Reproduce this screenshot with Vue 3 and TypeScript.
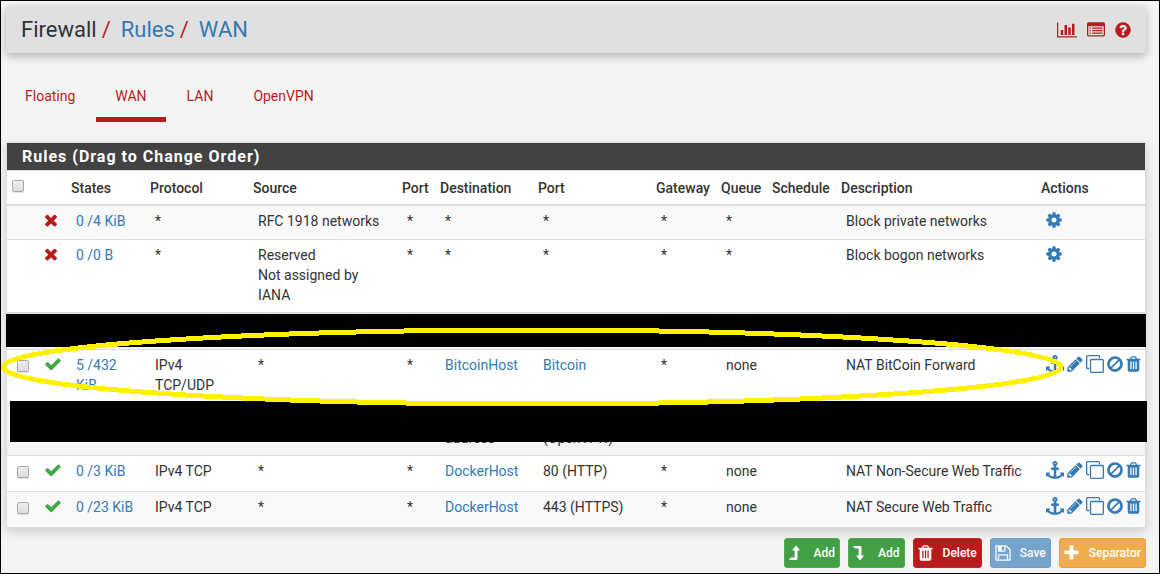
<script setup lang="ts">
import { ref } from 'vue'

interface Glyph {
  box: string
  width: number
  path: string
}

interface Rule {
  id: number
  kind: 'system' | 'user' | 'hidden'
  pass?: boolean
  states?: string
  protocol?: string
  source?: string
  sourcePort?: string
  destination?: string
  destinationPort?: string
  alias?: boolean
  portAlias?: boolean
  gateway?: string
  queue?: string
  description?: string
}

const glyphs: Record<string, Glyph> = {
  times: {
    box: '302 0 1188 1792',
    width: 12,
    path: 'M1490 1322q0 40-28 68l-136 136q-28 28-68 28t-68-28l-294-294-294 294q-28 28-68 28t-68-28l-136-136q-28-28-28-68t28-68l294-294-294-294q-28-28-28-68t28-68l136-136q28-28 68-28t68 28l294 294 294-294q28-28 68-28t68 28l136 136q28 28 28 68t-28 68l-294 294 294 294q28 28 28 68z',
  },
  check: {
    box: '121 0 1550 1792',
    width: 16,
    path: 'M1671 566q0 40-28 68l-724 724-136 136q-28 28-68 28t-68-28l-136-136-362-362q-28-28-28-68t28-68l136-136q28-28 68-28t68 28l294 295 656-657q28-28 68-28t68 28l136 136q28 28 28 68z',
  },
  cog: {
    box: '128 0 1536 1792',
    width: 16,
    path: 'M1152 896q0-106-75-181t-181-75-181 75-75 181 75 181 181 75 181-75 75-181zm512-109v222q0 12-8 23t-20 13l-185 28q-19 54-39 91 35 50 107 138 10 12 10 25t-9 23q-27 37-99 108t-94 71q-12 0-26-9l-138-108q-44 23-91 38-16 136-29 186-7 28-36 28h-222q-14 0-24.500-8.500t-11.500-21.500l-28-184q-49-16-90-37l-141 107q-10 9-25 9-14 0-25-11-126-114-165-168-7-10-7-23 0-12 8-23 15-21 51-66.500t54-70.500q-27-50-41-99l-183-27q-13-2-21-12.500t-8-23.500v-222q0-12 8-23t19-13l186-28q14-46 39-92-40-57-107-138-10-12-10-24 0-10 9-23 26-36 98.500-107.500t94.500-71.500q13 0 26 10l138 107q44-23 91-38 16-136 29-186 7-28 36-28h222q14 0 24.500 8.500t11.500 21.500l28 184q49 16 90 37l142-107q9-9 24-9 13 0 25 10 129 119 165 170 7 8 7 22 0 12-8 23-15 21-51 66.500t-54 70.500q26 50 41 98l183 28q13 2 21 12.500t8 23.500z',
  },
  anchor: {
    box: '0 0 1792 1792',
    width: 18,
    path: 'M960 256q0-26-19-45t-45-19-45 19-19 45 19 45 45 19 45-19 19-45zm832 928v352q0 22-20 30-8 2-12 2-12 0-23-9l-93-93q-119 143-318.500 226.500t-429.500 83.500-429.500-83.500-318.500-226.500l-93 93q-9 9-23 9-4 0-12-2-20-8-20-30v-352q0-14 9-23t23-9h352q22 0 30 20 8 19-7 35l-100 100q67 91 189.500 153.500t271.500 82.500v-647h-192q-26 0-45-19t-19-45v-128q0-26 19-45t45-19h192v-163q-58-34-93-92.500t-35-128.500q0-106 75-181t181-75 181 75 75 181q0 70-35 128.500t-93 92.500v163h192q26 0 45 19t19 45v128q0 26-19 45t-45 19h-192v647q149-20 271.500-82.500t189.500-153.500l-100-100q-15-16-7-35 8-20 30-20h352q14 0 23 9t9 23z',
  },
  pencil: {
    box: '128 0 1536 1792',
    width: 16,
    path: 'M491 1536l91-91-235-235-91 91v107h128v128h107zm523-928q0-22-22-22-10 0-17 7l-542 542q-7 7-7 17 0 22 22 22 10 0 17-7l542-542q7-7 7-17zm-54-192l416 416-832 832h-416v-416zm683 96q0 53-37 90l-166 166-416-416 166-165q36-38 90-38 53 0 91 38l235 234q37 39 37 91z',
  },
  clone: {
    box: '0 0 1792 1792',
    width: 18,
    path: 'M1664 1632v-1088q0-13-9.500-22.500t-22.500-9.500h-1088q-13 0-22.500 9.500t-9.500 22.500v1088q0 13 9.500 22.500t22.500 9.500h1088q13 0 22.500-9.500t9.500-22.500zm128-1088v1088q0 66-47 113t-113 47h-1088q-66 0-113-47t-47-113v-1088q0-66 47-113t113-47h1088q66 0 113 47t47 113zm-384-384v160h-128v-160q0-13-9.500-22.500t-22.500-9.500h-1088q-13 0-22.500 9.500t-9.500 22.500v1088q0 13 9.500 22.500t22.500 9.500h160v128h-160q-66 0-113-47t-47-113v-1088q0-66 47-113t113-47h1088q66 0 113 47t47 113z',
  },
  ban: {
    box: '128 0 1536 1792',
    width: 16,
    path: 'M112 896a784 784 0 1 1 1568 0a784 784 0 1 1-1568 0zM1312 595L595 1312A518 518 0 0 0 1312 595zM1197 480A518 518 0 0 0 480 1197z',
  },
  trash: {
    box: '192 0 1408 1792',
    width: 15,
    path: 'M704 1376v-704q0-14-9-23t-23-9h-64q-14 0-23 9t-9 23v704q0 14 9 23t23 9h64q14 0 23-9t9-23zm256 0v-704q0-14-9-23t-23-9h-64q-14 0-23 9t-9 23v704q0 14 9 23t23 9h64q14 0 23-9t9-23zm256 0v-704q0-14-9-23t-23-9h-64q-14 0-23 9t-9 23v704q0 14 9 23t23 9h64q14 0 23-9t9-23zm-544-992h448l-48-117q-7-9-17-11h-317q-10 2-17 11zm928 32v64q0 14-9 23t-23 9h-96v948q0 83-47 143.500t-113 60.500h-832q-66 0-113-58.500t-47-141.500v-952h-96q-14 0-23-9t-9-23v-64q0-14 9-23t23-9h309l70-167q15-37 54-63t79-26h320q40 0 79 26t54 63l70 167h309q14 0 23 9t9 23z',
  },
  chart: {
    box: '0 0 2048 1792',
    width: 20,
    path: 'M640 896v512h-256v-512h256zm384-512v1024h-256v-1024h256zm1024 1152v128h-2048v-1536h128v1408h1920zm-640-896v768h-256v-768h256zm384-384v1152h-256v-1152h256z',
  },
  list: {
    box: '0 0 1792 1792',
    width: 18,
    path: 'M160 128H1632Q1792 128 1792 288V1376Q1792 1536 1632 1536H160Q0 1536 0 1376V288Q0 128 160 128zM128 512V1376Q128 1408 160 1408H1632Q1664 1408 1664 1376V512zM256 640h128v128H256zM512 640h1024v128H512zM256 896h128v128H256zM512 896h1024v128H512zM256 1152h128v128H256zM512 1152h1024v128H512z',
  },
  question: {
    box: '128 0 1536 1792',
    width: 16,
    path: 'M1024 1376v-192q0-14-9-23t-23-9h-192q-14 0-23 9t-9 23v192q0 14 9 23t23 9h192q14 0 23-9t9-23zm256-672q0-88-55.500-163t-138.500-116-170-41q-243 0-371 213-15 24 8 42l132 100q7 6 19 6 16 0 25-12 53-68 86-92 34-24 86-24 48 0 85.500 26t37.500 59q0 38-20 61t-68 45q-63 28-115.500 86.500t-52.500 125.500v36q0 14 9 23t23 9h192q14 0 23-9t9-23q0-19 21.500-49.500t54.500-49.500q32-18 49-28.500t46-35 44.500-48 28-60.500 12.500-81zm384 192q0 209-103 385.500t-279.500 279.500-385.500 103-385.500-103-279.500-279.500-103-385.500 103-385.500 279.500-279.500 385.500-103 385.500 103 279.500 279.500 103 385.500z',
  },
  up: {
    box: '0 0 1120 1792',
    width: 11,
    path: 'M0 1600H720Q864 1600 864 1456V640H1060Q1120 630 1080 576L760 176Q720 130 680 176L360 576Q320 630 380 640H576V1344H240Q215 1344 200 1364L0 1580z',
  },
  down: {
    box: '0 0 1120 1792',
    width: 11,
    path: 'M0 192H720Q864 192 864 336V1152H1060Q1120 1162 1080 1216L760 1616Q720 1662 680 1616L360 1216Q320 1162 380 1152H576V448H240Q215 448 200 428L0 212z',
  },
  save: {
    box: '128 0 1536 1792',
    width: 16,
    path: 'M512 1536h768v-384h-768v384zm896 0h128v-896q0-14-10-38.500t-20-34.500l-281-281q-10-10-34-20t-39-10v416q0 40-28 68t-68 28h-576q-40 0-68-28t-28-68v-416h-128v1280h128v-416q0-40 28-68t68-28h832q40 0 68 28t28 68v416zm-384-928v-320q0-13-9.500-22.500t-22.500-9.500h-192q-13 0-22.500 9.500t-9.500 22.500v320q0 13 9.500 22.500t22.500 9.500h192q13 0 22.500-9.500t9.500-22.500zm640 32v928q0 40-28 68t-68 28h-1344q-40 0-68-28t-28-68v-1344q0-40 28-68t68-28h928q40 0 88 20t76 48l280 280q28 28 48 76t20 88z',
  },
  plus: {
    box: '192 0 1408 1792',
    width: 15,
    path: 'M1600 736v192q0 40-28 68t-68 28h-416v416q0 40-28 68t-68 28h-192q-40 0-68-28t-28-68v-416h-416q-40 0-68-28t-28-68v-192q0-40 28-68t68-28h416v-416q0-40 28-68t68-28h192q40 0 68 28t28 68v416h416q40 0 68 28t28 68z',
  },
}

const tabs = ['Floating', 'WAN', 'LAN', 'OpenVPN']
const activeTab = ref('WAN')

const shortcuts = [
  { icon: 'chart', label: 'Status' },
  { icon: 'list', label: 'Log' },
  { icon: 'question', label: 'Help' },
]

const headings = ['States', 'Protocol', 'Source', 'Port', 'Destination', 'Port', 'Gateway', 'Queue', 'Schedule', 'Description', 'Actions']

const ruleActions = [
  { icon: 'anchor', label: 'Move checked rules here' },
  { icon: 'pencil', label: 'Edit' },
  { icon: 'clone', label: 'Copy' },
  { icon: 'ban', label: 'Disable' },
  { icon: 'trash', label: 'Delete' },
]

const star = { source: '*', sourcePort: '*', gateway: '*' }

const rules: Rule[] = [
  { ...star, id: 1, kind: 'system', pass: false, states: '0 /4 KiB', protocol: '*', source: 'RFC 1918 networks', destination: '*', destinationPort: '*', queue: '*', description: 'Block private networks' },
  { ...star, id: 2, kind: 'system', pass: false, states: '0 /0 B', protocol: '*', source: 'Reserved\nNot assigned by\nIANA', destination: '*', destinationPort: '*', queue: '*', description: 'Block bogon networks' },
  { id: 3, kind: 'hidden' },
  { ...star, id: 4, kind: 'user', pass: true, states: '5 /432\nKiB', protocol: 'IPv4\nTCP/UDP', destination: 'BitcoinHost', alias: true, destinationPort: 'Bitcoin', portAlias: true, queue: 'none', description: 'NAT BitCoin Forward' },
  { id: 5, kind: 'hidden', destination: '\naddress', destinationPort: '\n(OpenVPN)' },
  { ...star, id: 6, kind: 'user', pass: true, states: '0 /3 KiB', protocol: 'IPv4 TCP', destination: 'DockerHost', alias: true, destinationPort: '80 (HTTP)', queue: 'none', description: 'NAT Non-Secure Web Traffic' },
  { ...star, id: 7, kind: 'user', pass: true, states: '0 /23 KiB', protocol: 'IPv4 TCP', destination: 'DockerHost', alias: true, destinationPort: '443 (HTTPS)', queue: 'none', description: 'NAT Secure Web Traffic' },
]

const buttons = [
  { icon: 'up', label: 'Add', tone: 'success' },
  { icon: 'down', label: 'Add', tone: 'success' },
  { icon: 'trash', label: 'Delete', tone: 'danger' },
  { icon: 'save', label: 'Save', tone: 'primary' },
  { icon: 'plus', label: 'Separator', tone: 'warning' },
]
</script>

<template>
  <div class="page">
    <header class="topbar">
      <h1 class="crumbs">
        <span>Firewall</span><i>/</i><a href="#rules">Rules</a><i>/</i><a href="#wan">WAN</a>
      </h1>
      <nav class="shortcuts" aria-label="Shortcuts">
        <a v-for="s in shortcuts" :key="s.icon" href="#" :aria-label="s.label">
          <svg class="icon" :width="glyphs[s.icon].width" height="18" :viewBox="glyphs[s.icon].box"><path :d="glyphs[s.icon].path" /></svg>
        </a>
      </nav>
    </header>

    <nav class="tabs" aria-label="Interfaces">
      <a v-for="t in tabs" :key="t" href="#" class="tab" :class="{ active: t === activeTab }" @click.prevent="activeTab = t">{{ t }}</a>
    </nav>

    <section class="panel">
      <h2 class="panel-title">Rules (Drag to Change Order)</h2>
      <table class="rules">
        <colgroup>
          <col class="c-check"><col class="c-icon"><col class="c-states"><col class="c-proto"><col class="c-source">
          <col class="c-sport"><col class="c-dest"><col class="c-dport"><col class="c-gate"><col class="c-queue">
          <col class="c-sched"><col class="c-desc"><col class="c-act">
        </colgroup>
        <thead>
          <tr>
            <th class="check"><input type="checkbox" class="box" aria-label="Select all rules"></th>
            <th></th>
            <th v-for="(h, i) in headings" :key="i" scope="col">{{ h }}</th>
          </tr>
        </thead>
        <tbody>
          <tr v-for="r in rules" :key="r.id" :class="[r.kind, 'rule-' + r.id]">
            <td><input v-if="r.kind === 'user'" type="checkbox" class="box" :aria-label="'Select ' + r.description"></td>
            <td>
              <svg v-if="r.pass" class="icon pass" :width="glyphs.check.width" height="18" :viewBox="glyphs.check.box"><path :d="glyphs.check.path" /></svg>
              <svg v-else-if="r.kind === 'system'" class="icon block" :width="glyphs.times.width" height="18" :viewBox="glyphs.times.box"><path :d="glyphs.times.path" /></svg>
            </td>
            <td><a v-if="r.states" href="#">{{ r.states }}</a></td>
            <td>{{ r.protocol }}</td>
            <td>{{ r.source }}</td>
            <td>{{ r.sourcePort }}</td>
            <td><a v-if="r.alias" href="#">{{ r.destination }}</a><template v-else>{{ r.destination }}</template></td>
            <td><a v-if="r.portAlias" href="#">{{ r.destinationPort }}</a><template v-else>{{ r.destinationPort }}</template></td>
            <td>{{ r.gateway }}</td>
            <td>{{ r.queue }}</td>
            <td></td>
            <td>{{ r.description }}</td>
            <td class="act">
              <div v-if="r.kind === 'system'" class="actions">
                <a href="#" aria-label="Settings">
                  <svg class="icon" :width="glyphs.cog.width" height="18" :viewBox="glyphs.cog.box"><path :d="glyphs.cog.path" /></svg>
                </a>
              </div>
              <div v-else-if="r.kind === 'user'" class="actions">
                <a v-for="a in ruleActions" :key="a.icon" href="#" :aria-label="a.label">
                  <svg class="icon" :width="glyphs[a.icon].width" height="18" :viewBox="glyphs[a.icon].box"><path :d="glyphs[a.icon].path" /></svg>
                </a>
              </div>
            </td>
          </tr>
        </tbody>
      </table>
      <div class="redaction first"></div>
      <div class="redaction second"></div>
      <svg class="marker" viewBox="0 0 1064 80" preserveAspectRatio="none" aria-hidden="true">
        <ellipse cx="532" cy="40" rx="529" ry="37" />
      </svg>
    </section>

    <div class="buttons">
      <button v-for="(b, i) in buttons" :key="i" type="button" class="btn" :class="b.tone">
        <svg class="icon" :width="glyphs[b.icon].width" height="18" :viewBox="glyphs[b.icon].box"><path :d="glyphs[b.icon].path" /></svg>
        <span>{{ b.label }}</span>
      </button>
    </div>
  </div>
</template>

<style>
body {
  margin: 0;
  background: #f4f4f4;
}
</style>

<style scoped>
.page {
  box-sizing: border-box;
  min-height: 100vh;
  padding: 5px 13px 5px 5px;
  border: 1px solid #000;
  font-family: Roboto, "Liberation Sans", sans-serif;
  font-size: 14px;
  line-height: 20px;
  color: #333;
  background: #f4f4f4;
  overflow: hidden;
}
a {
  color: #337ab7;
  text-decoration: none;
}
.icon {
  display: block;
  fill: currentColor;
}
.topbar {
  display: flex;
  align-items: center;
  justify-content: space-between;
  height: 47px;
  padding: 0 15px;
  border-radius: 3px;
  background: #e0e0e0;
  box-shadow: 0 3px 8px rgba(0, 0, 0, 0.28);
}
.crumbs {
  display: flex;
  margin: 0;
  font-size: 22px;
  line-height: 28px;
  font-weight: 400;
  color: #333;
}
.crumbs i {
  margin: 0 10px 0 5px;
  font-style: normal;
  color: #b71c1c;
}
.shortcuts {
  display: flex;
  gap: 10px;
}
.shortcuts a {
  color: #b71c1c;
}
.tabs {
  display: flex;
  gap: 2px;
  margin: 23px 0 20px;
}
.tab {
  padding: 10px 19px 11px;
  border-bottom: 5px solid transparent;
  color: #b71c1c;
}
.tab.active {
  border-bottom-color: #b71c1c;
}
.panel {
  position: relative;
  border: 1px solid #ddd;
  background: #fff;
  box-shadow: 0 4px 10px rgba(0, 0, 0, 0.16);
}
.panel-title {
  margin: 0;
  padding: 4px 15px 3px;
  border-bottom: 1px solid #ddd;
  font-size: 16px;
  line-height: 20px;
  font-weight: 700;
  letter-spacing: 1px;
  color: #fff;
  background: #424242;
}
.rules {
  width: 100%;
  table-layout: fixed;
  border-collapse: separate;
  border-spacing: 0;
}
.c-check { width: 28px; }
.c-icon { width: 31px; }
.c-states { width: 79px; }
.c-proto { width: 103px; }
.c-source { width: 149px; }
.c-sport { width: 38px; }
.c-dest { width: 98px; }
.c-dport { width: 118px; }
.c-gate { width: 65px; }
.c-queue { width: 51px; }
.c-sched { width: 69px; }
.c-act { width: 109px; }
th {
  padding: 7px 0 6px 5px;
  border-bottom: 2px solid #ddd;
  text-align: left;
  font-weight: 500;
}
td {
  height: 22px;
  padding: 5px 0 6px 10px;
  border-bottom: 1px solid #ddd;
  vertical-align: top;
  white-space: pre-line;
}
.rule-1 td,
.rule-7 td {
  background: #f9f9f9;
}
.rule-2 td {
  height: 60px;
  padding-bottom: 7px;
  border-bottom-width: 2px;
}
.rule-3 td {
  height: 24px;
}
.rule-4 td,
.rule-5 td {
  height: 41px;
}
.hidden td {
  background: #f4f4f4;
}
.rule-6 td,
.rule-7 td {
  height: 24px;
}
.rule-7 td {
  border-bottom: 0;
}
td.act {
  padding-right: 4px;
}
.actions {
  display: flex;
  gap: 3px;
}
.pass {
  color: #43a84a;
}
.block {
  color: #b71c1c;
}
.box {
  appearance: none;
  display: block;
  box-sizing: border-box;
  width: 12px;
  height: 12px;
  margin: 5px 0 0;
  border: 1px solid #a8a8a8;
  border-radius: 2px;
  background: linear-gradient(#eee, #dcdcdc);
  box-shadow: 0 1px 1px rgba(0, 0, 0, 0.12);
}
.box:checked {
  background: #337ab7;
}
th .box {
  margin: 0 0 4px;
}
.redaction {
  position: absolute;
  height: 33px;
  background: #000;
}
.redaction.first {
  top: 171px;
  left: -1px;
  right: -1px;
}
.redaction.second {
  top: 258px;
  left: 3px;
  right: -2px;
  height: 41px;
}
.marker {
  position: absolute;
  top: 184px;
  left: -7px;
  width: calc(100% - 74px);
  height: 80px;
  overflow: visible;
  pointer-events: none;
}
.marker ellipse {
  fill: none;
  stroke: #fff200;
  stroke-width: 5px;
  shape-rendering: crispEdges;
}
.buttons {
  display: flex;
  justify-content: flex-end;
  gap: 8px;
  margin-top: 10px;
}
.btn {
  display: flex;
  align-items: center;
  gap: 10px;
  height: 30px;
  padding: 0 4px;
  border: 1px solid transparent;
  border-radius: 3px;
  font: 500 12px/18px Roboto, "Liberation Sans", sans-serif;
  color: #fff;
}
.success {
  gap: 14px;
  border-color: #4cae4c;
  background: #43a047;
}
.danger {
  border-color: #c62828;
  background: #b71c1c;
}
.primary {
  gap: 9px;
  border-color: #2e6da4;
  background: #337ab7;
  opacity: 0.65;
}
.warning {
  border-color: #eea236;
  background: #f0ad4e;
}
</style>
